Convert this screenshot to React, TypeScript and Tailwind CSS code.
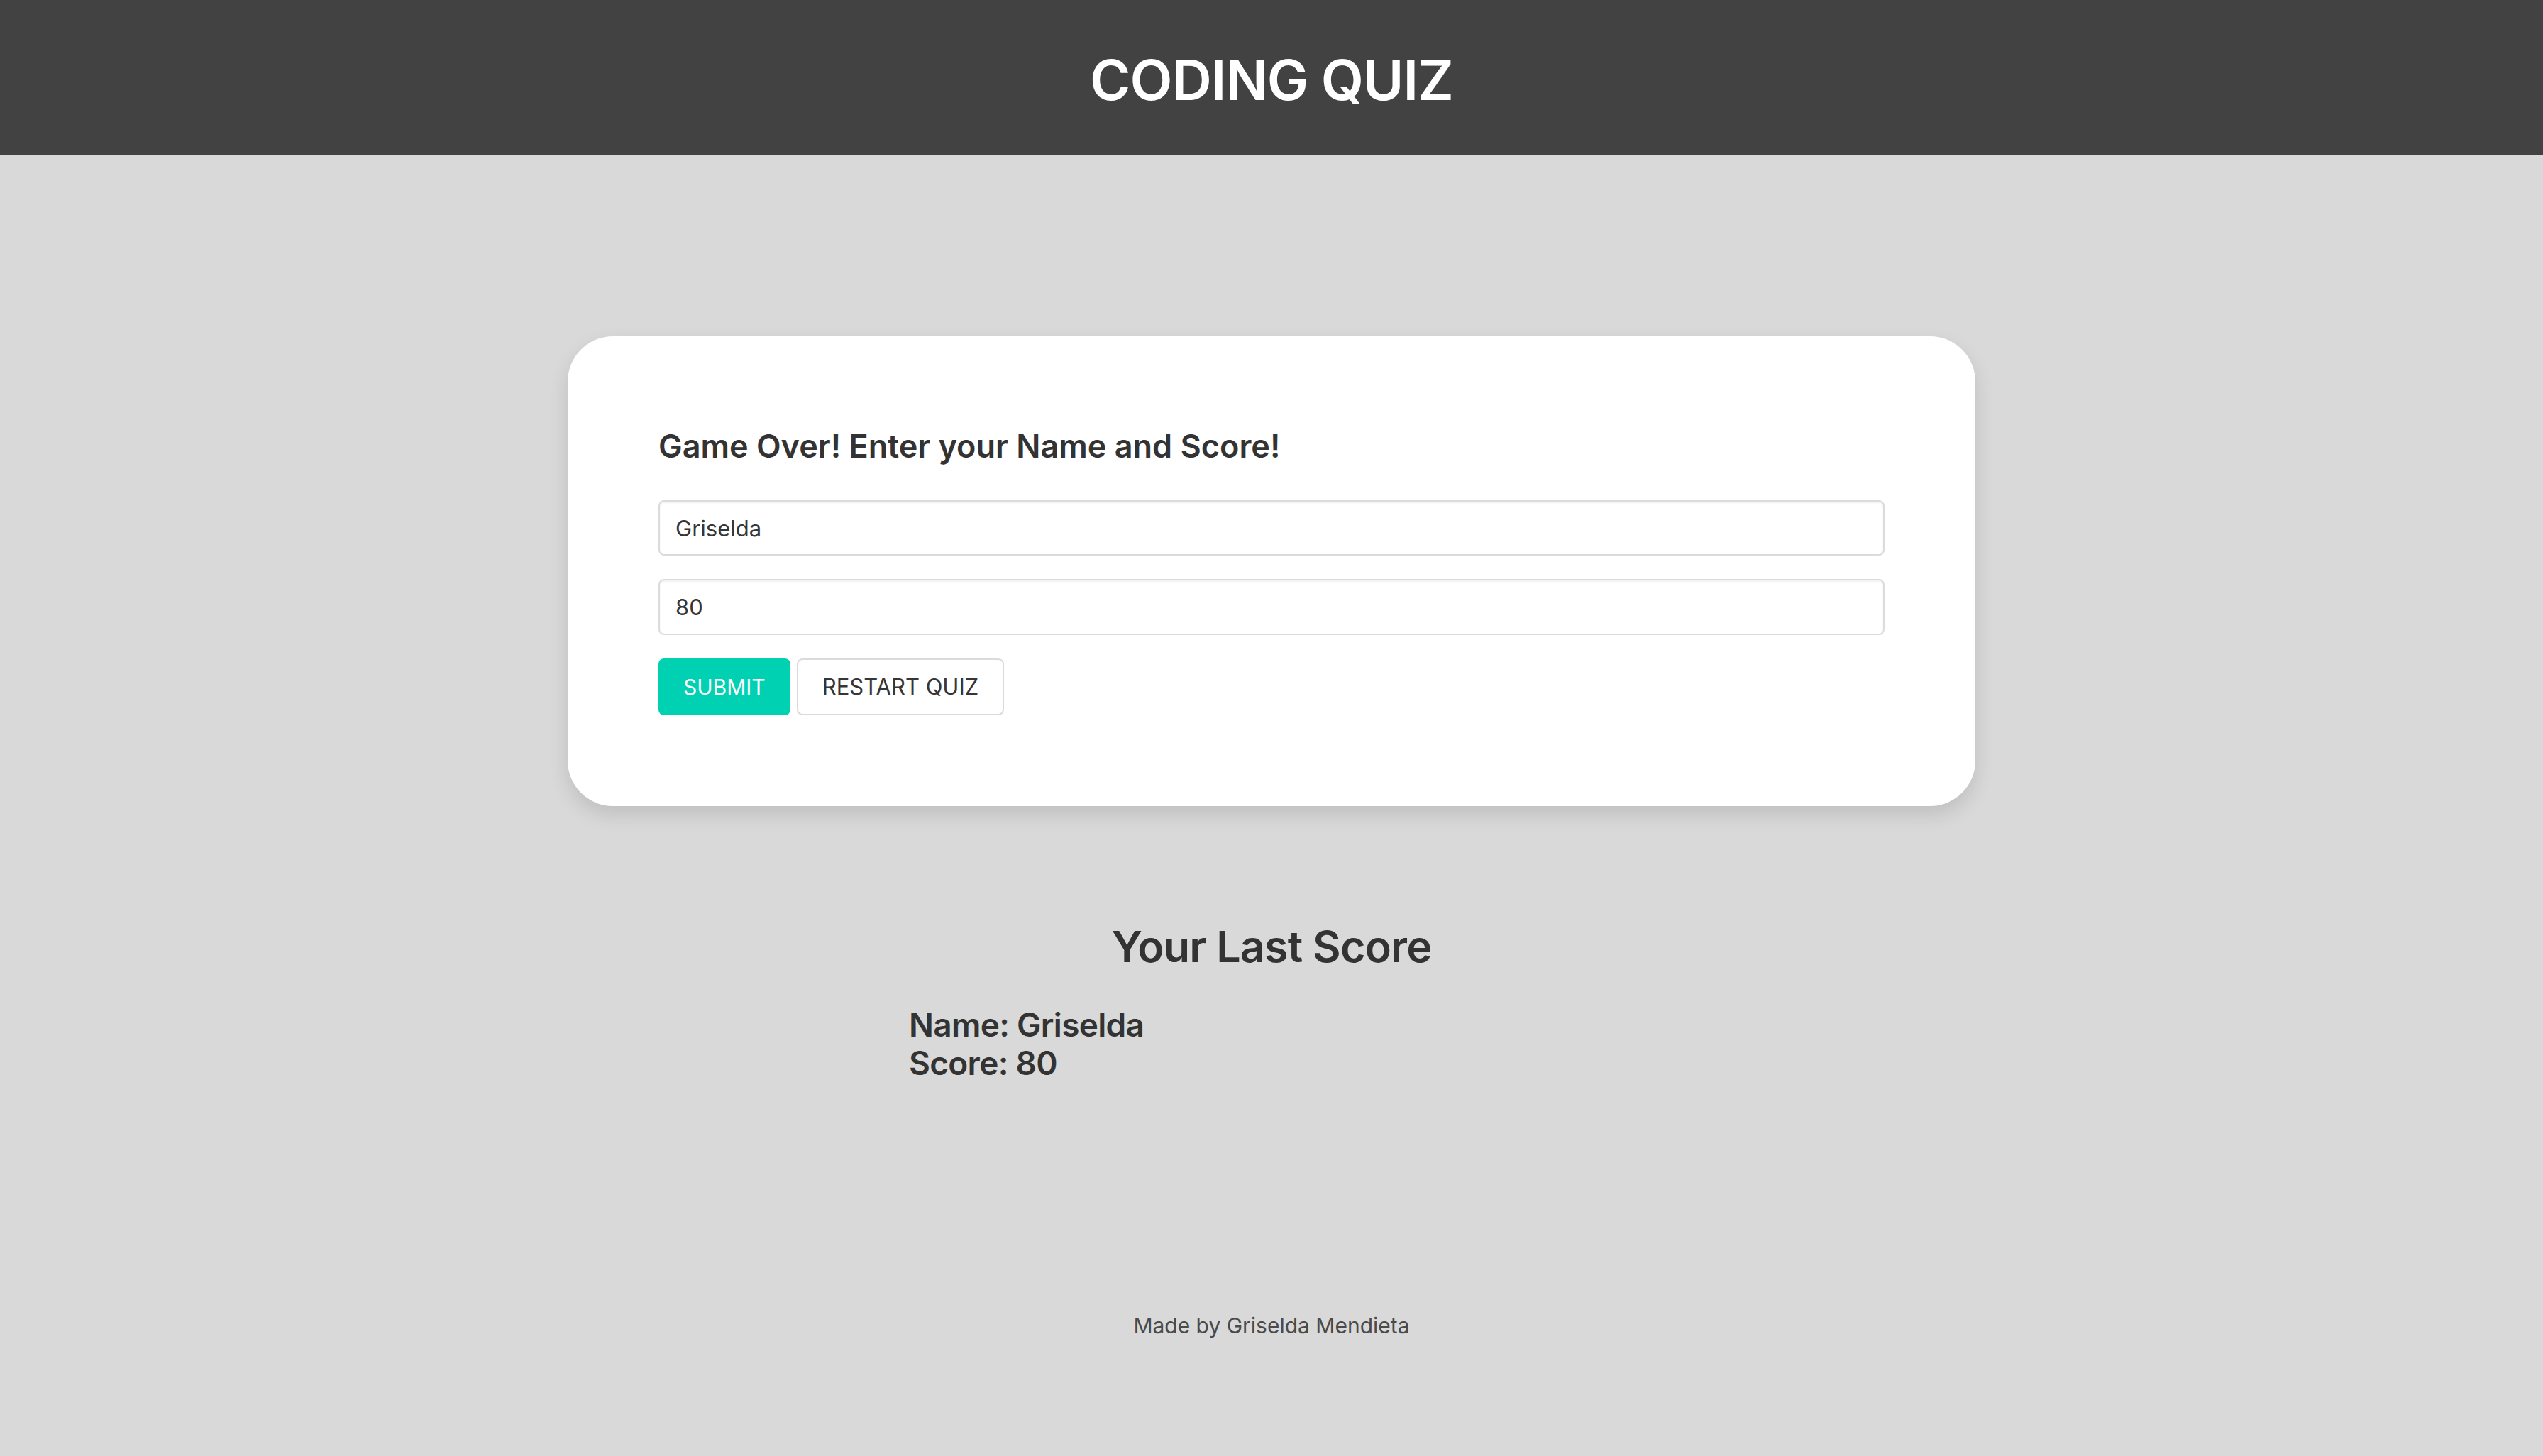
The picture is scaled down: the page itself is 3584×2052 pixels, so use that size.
import React, { useState } from "react";

export default function App() {
  const [name, setName] = useState("Griselda");
  const [score, setScore] = useState("80");

  return (
    <div className="min-h-screen bg-[#d9d9d9] font-['Inter','Liberation_Sans',sans-serif] text-[#363636]">
      {/* Header */}
      <header className="h-[218px] bg-[#424242] flex items-center justify-center pt-[8px]">
        <h1 className="text-[78px] font-semibold text-white leading-none tracking-[-1px]">CODING QUIZ</h1>
      </header>

      {/* Game over card */}
      <main className="flex justify-center pt-[256px]">
        <div className="w-[1984px] bg-white rounded-[64px] shadow-[0_12px_28px_rgba(0,0,0,0.12)] p-[128px]">
          <h2 className="text-[45px] font-semibold leading-[53px] text-[#333]">
            Game Over! Enter your Name and Score!
          </h2>

          <div className="mt-[50px] flex flex-col gap-[33px]">
            <input
              value={name}
              onChange={(e) => setName(e.target.value)}
              className="h-[78px] w-full rounded-[8px] border-2 border-[#dbdbdb] bg-white px-[22px] text-[31px] text-[#363636] shadow-[inset_0_2px_3px_rgba(10,10,10,0.06)] outline-none"
            />
            <input
              value={score}
              onChange={(e) => setScore(e.target.value)}
              className="h-[79px] w-full rounded-[8px] border-2 border-[#dbdbdb] bg-white px-[22px] text-[31px] text-[#363636] shadow-[inset_0_2px_3px_rgba(10,10,10,0.06)] outline-none"
            />
            <div className="flex gap-[9px]">
              <button className="h-[80px] rounded-[8px] border-2 border-transparent bg-[#00d1b2] px-[33px] text-[30px] text-white">
                SUBMIT
              </button>
              <button className="h-[80px] rounded-[8px] border-2 border-[#dbdbdb] bg-white px-[34px] text-[31px] text-[#363636]">
                RESTART QUIZ
              </button>
            </div>
          </div>
        </div>
      </main>

      {/* Last score */}
      <section className="mt-[161px] flex flex-col items-center">
        <h2 className="text-[61px] font-semibold leading-[74px] tracking-[-0.8px] text-[#333]">Your Last Score</h2>
        <div className="mt-[46px] w-[1022px] text-[46px] font-semibold leading-[54px] tracking-[-0.7px] text-[#333]">
          <p>Name: {name}</p>
          <p>Score: {score}</p>
        </div>
      </section>

      {/* Footer */}
      <footer className="mt-[321px] pb-[160px] text-center text-[30px] leading-[45px] text-[#4a4a4a]">
        Made by Griselda Mendieta
      </footer>
    </div>
  );
}
